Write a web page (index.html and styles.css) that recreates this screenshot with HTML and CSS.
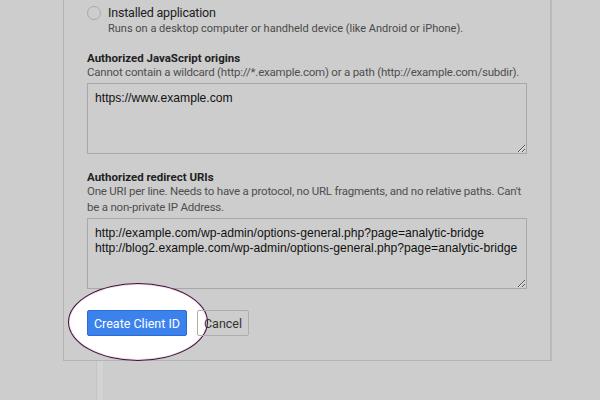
FILE: index.html
```html
<!DOCTYPE html>
<html>
<head>
<meta charset="utf-8">
<link rel="stylesheet" href="styles.css">
</head>
<body>
<div class="page">
  <div class="card">
    <div class="radio-row">
      <span class="radio"></span>
      <span class="radio-label">Installed application</span>
    </div>
    <div class="radio-desc">Runs on a desktop computer or handheld device (like Android or iPhone).</div>

    <div class="label first">Authorized JavaScript origins</div>
    <div class="desc single">Cannot contain a wildcard (http://*.example.com) or a path (http://example.com/subdir).</div>
    <textarea class="field" readonly>https://www.example.com</textarea>

    <div class="label">Authorized redirect URIs</div>
    <div class="desc">One URI per line. Needs to have a protocol, no URL fragments, and no relative paths. Can't be a non-private IP Address.</div>
    <textarea class="field" readonly>http://example.com/wp-admin/options-general.php?page=analytic-bridge
http://blog2.example.com/wp-admin/options-general.php?page=analytic-bridge</textarea>

    <div class="actions">
      <button class="btn primary">Create Client ID</button>
      <button class="btn secondary">Cancel</button>
    </div>
  </div>
  <div class="strip"></div>
</div>
<div class="spotlight"></div>
</body>
</html>
```

FILE: styles.css
```css
html, body {
  margin: 0;
  padding: 0;
  background: #cdcdcd;
  width: 600px;
  height: 400px;
  overflow: hidden;
  font-family: Roboto, "Liberation Sans", sans-serif;
  color: #222;
}

.page {
  padding-left: 63px;
}

.card {
  width: 463px;
  margin-top: -5px;
  padding: 10px 0 24px 23px;
  border: 1px solid #b4b4b4;
  border-top: none;
  border-right: 2px solid #bababa;
  background: #cdcdcd;
  position: relative;
}

.radio-row {
  display: flex;
  align-items: center;
  height: 16px;
}

.radio {
  width: 12px;
  height: 12px;
  border: 1px solid #a9a9a9;
  border-radius: 50%;
  box-sizing: content-box;
  margin-right: 7px;
}

.radio-label {
  font-size: 12.5px;
  letter-spacing: -0.2px;
  line-height: 16px;
  color: #202020;
}

.radio-desc {
  margin-left: 21px;
  font-size: 11px;
  line-height: 15px;
  color: #4a4a4a;
}

.label {
  margin-top: 16px;
  font-size: 11.5px;
  font-weight: bold;
  line-height: 15px;
  color: #222;
}

.label.first {
  margin-top: 15px;
}

.desc {
  margin-top: -2px;
  font-size: 11.5px;
  letter-spacing: -0.22px;
  line-height: 16px;
  color: #4f4f4f;
  width: 440px;
}

.desc.single {
  white-space: nowrap;
}

.field {
  display: block;
  box-sizing: border-box;
  margin-top: 3px;
  width: 440px;
  height: 71px;
  padding: 7px 7px;
  border: 1px solid #a8a8a8;
  background: #cdcdcd;
  font-family: "Liberation Sans", Arial, sans-serif;
  font-size: 12.15px;
  line-height: 15px;
  color: #111;
  outline: none;
  overflow: hidden;
  white-space: pre;
}

.actions {
  display: flex;
  gap: 10px;
  margin-top: 21px;
  position: relative;
  z-index: 2;
}

.btn {
  height: 26px;
  box-sizing: border-box;
  font-family: Roboto, "Liberation Sans", sans-serif;
  font-size: 12.5px;
  padding: 0;
  border-radius: 2px;
}

.primary {
  width: 100px;
  background: #3b82ec;
  border: 1px solid #2a6bd6;
  color: #fff;
}

.secondary {
  width: 52px;
  background: transparent;
  border: 1px solid #adadad;
  color: #333;
}

.strip {
  margin-left: 33px;
  width: 6px;
  height: 45px;
  background: #d3d3d3;
  border-left: 1px solid #c4c4c4;
}

.spotlight {
  position: absolute;
  left: 68px;
  top: 283px;
  width: 140px;
  height: 78px;
  box-sizing: border-box;
  border: 1.5px solid #3e1238;
  border-radius: 50%;
  background: #ffffff;
  box-shadow: inset 0 0 0 1px #f2d8ef;
  z-index: 1;
}

.actions .btn {
  position: relative;
  z-index: 3;
}
```
